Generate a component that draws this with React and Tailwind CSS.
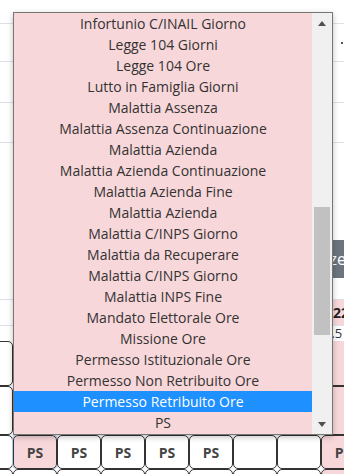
import React from "react";

const options = [
  "Infortunio C/INAIL Giorno",
  "Legge 104 Giorni",
  "Legge 104 Ore",
  "Lutto in Famiglia Giorni",
  "Malattia Assenza",
  "Malattia Assenza Continuazione",
  "Malattia Azienda",
  "Malattia Azienda Continuazione",
  "Malattia Azienda Fine",
  "Malattia Azienda",
  "Malattia C/INPS Giorno",
  "Malattia da Recuperare",
  "Malattia C/INPS Giorno",
  "Malattia INPS Fine",
  "Mandato Elettorale Ore",
  "Missione Ore",
  "Permesso Istituzionale Ore",
  "Permesso Non Retribuito Ore",
  "Permesso Retribuito Ore",
  "PS",
];

const selected = "Permesso Retribuito Ore";

// codes for the visible row of the timesheet (col 0 is cut off on the left)
const psRow = ["", "PS", "PS", "PS", "PS", "PS", "", "", "PS"];
const pinkCols = [1, 8];

function Cell({ children, pink, className = "" }) {
  return (
    <div
      className={
        "w-[44px] shrink-0 rounded-[5px] border border-[#333] flex items-center justify-center font-bold text-[14px] text-[#444] " +
        (pink ? "bg-[#f8d7da] " : "bg-white ") +
        className
      }
    >
      {children}
    </div>
  );
}

function Arrow({ up }) {
  return (
    <svg width="8" height="5" viewBox="0 0 8 5">
      <path d={up ? "M0 5 L4 0 L8 5 Z" : "M0 0 L4 5 L8 0 Z"} fill="#505050" />
    </svg>
  );
}

export default function App() {
  return (
    <div
      className="relative w-[344px] h-[474px] overflow-hidden bg-white"
      style={{ fontFamily: '"Open Sans", "Noto Sans", sans-serif' }}
    >
      {/* page behind the dropdown */}
      <div className="flex flex-col">
        <div className="h-[24px] border-b border-[#dee2e6]" />
        <div className="h-[38px] border-b border-[#dee2e6] flex items-center justify-end pr-[1px]">
          <span className="w-[2px] h-[2px] bg-[#555]" />
        </div>
        <div className="h-[41px] border-b border-[#dee2e6]" />
        <div className="h-[40px] border-b border-[#dee2e6]" />
        <div className="h-[97px]" />
        <div className="h-[38px] ml-[200px] bg-[#6c757d] overflow-hidden whitespace-nowrap flex items-center pl-[78px] text-[16px] text-white">
          Presenze
        </div>
        <div className="h-[21px]" />

        {/* timesheet header */}
        <div className="flex ml-[-31px] h-[27px] border-y border-[#dee2e6]">
          {[0, 1, 2, 3, 4, 5, 6, 7].map((i) => (
            <div key={i} className="w-[44px] shrink-0" />
          ))}
          <div className="w-[44px] shrink-0 bg-[#f8d7da] flex items-center pl-[12px] font-bold text-[14px] text-[#222]">
            22
          </div>
        </div>
        <div className="flex ml-[-31px] h-[15px]">
          {[0, 1, 2, 3, 4, 5, 6, 7].map((i) => (
            <div key={i} className="w-[44px] shrink-0" />
          ))}
          <div className="w-[44px] shrink-0 flex items-center pl-[3px] text-[13px] leading-none text-[#333]">
            7.5
          </div>
        </div>

        {/* timesheet cells */}
        <div className="flex ml-[-31px] h-[45px]">
          {[0, 1, 2, 3, 4, 5, 6, 7, 8].map((i) => (
            <Cell key={i} pink={i === 8} className={i === 8 ? "border-x-0 border-t-0 rounded-none" : ""} />
          ))}
        </div>
        <div className="flex ml-[-31px] h-[49px]">
          {[0, 1, 2, 3, 4, 5, 6, 7, 8].map((i) => (
            <Cell key={i} pink={i === 8} />
          ))}
        </div>
        <div className="flex ml-[-31px] h-[34px]">
          {psRow.map((code, i) => (
            <Cell
              key={i}
              pink={pinkCols.includes(i)}
              className={i === 1 ? "outline outline-[1px] outline-[#a8c8e8]" : ""}
            >
              {code}
            </Cell>
          ))}
        </div>
        <div className="flex ml-[-31px] h-[34px]">
          {[0, 1, 2, 3, 4, 5, 6, 7, 8].map((i) => (
            <Cell key={i} pink={i === 8} />
          ))}
        </div>
      </div>

      {/* open select list */}
      <div className="absolute left-[13px] top-[12px] w-[320px] h-[423px] flex border border-[#767676] bg-[#f8d7da] shadow-[0_2px_6px_rgba(0,0,0,0.25)]">
        <ul className="flex-1 flex flex-col">
          {options.map((opt, i) => (
            <li
              key={i}
              className={
                "h-[21px] flex items-center justify-center text-[14px] whitespace-nowrap " +
                (opt === selected ? "bg-[#1e90ff] text-white" : "text-[#333]")
              }
            >
              {opt}
            </li>
          ))}
        </ul>
        <div className="w-[20px] bg-[#f0f0f0] flex flex-col">
          <div className="h-[20px] flex items-center justify-center">
            <Arrow up />
          </div>
          <div className="flex-1 flex flex-col px-[2px]">
            <div className="mt-[174px] h-[128px] bg-[#c1c1c1]" />
          </div>
          <div className="h-[20px] flex items-center justify-center">
            <Arrow />
          </div>
        </div>
      </div>
    </div>
  );
}
